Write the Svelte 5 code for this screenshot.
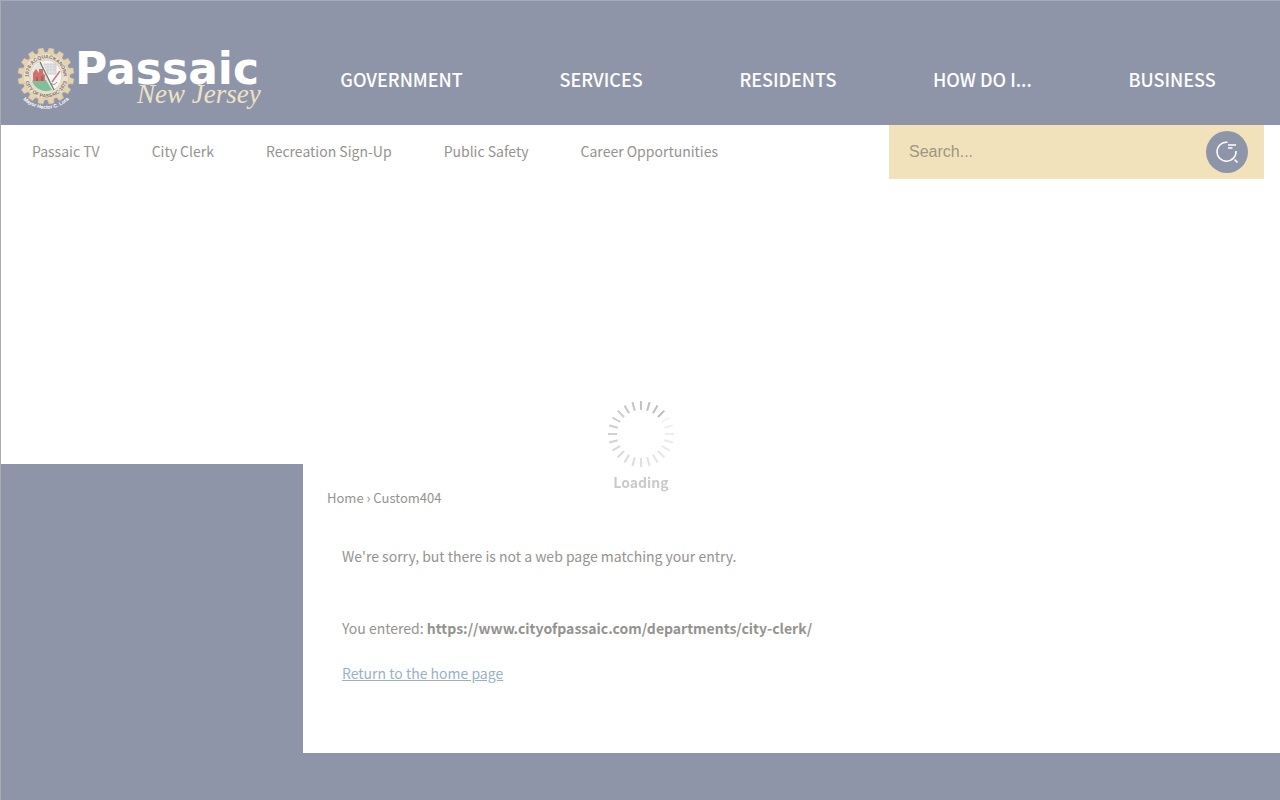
<script>
  const sections = ['GOVERNMENT', 'SERVICES', 'RESIDENTS', 'HOW DO I...', 'BUSINESS'];
  const quickLinks = ['Passaic TV', 'City Clerk', 'Recreation Sign-Up', 'Public Safety', 'Career Opportunities'];
  const teeth = Array.from({ length: 16 }, (_, i) => i * 22.5 + 11.25);
  // Spokes run clockwise from the faintest to the darkest, which sits at 45 degrees.
  const spokes = Array.from({ length: 24 }, (_, i) => ({ angle: 60 + i * 15, opacity: 0.2 + (i / 23) * 0.8 }));
  let query = $state('');
</script>

<div class="page">
  <header>
    <a class="logo" href="#home" aria-label="Passaic, New Jersey">
      <svg width="248" height="68" viewBox="0 0 248 68">
        <g transform="translate(31 31)">
          {#each teeth as angle}
            <path d="M-3.500 -22L-2.500 -28H2.500L3.500 -22Z" fill="#e6d3ac" stroke="#cdbca6" stroke-width=".5" transform="rotate({angle})" />
          {/each}
          <circle r="24" fill="#e4d3b0" />
          <circle r="22.500" fill="#ebe0cb" stroke="#d5c6ab" stroke-width=".5" />
          <circle r="16" fill="#f8f6f3" stroke="#cfc5b5" stroke-width=".7" />
          <path d="M-15 0A15 15 0 0 1 -5 -14L7 14A15 15 0 0 1 -15 0Z" fill="#e3e7da" />
          <path d="M-14 5Q-7 1 0 4L6 14A15 15 0 0 1 -14 5Z" fill="#7fc09a" />
          <path d="M-13 5V-3L-10 -7L-7 -3V-7H-3V-3L-1 -1V5Z" fill="#d3706f" />
          <path d="M-10 5V1H-8V5M-5 5V0H-3V5" fill="#a9605d" />
          <path d="M-6 -14L8 14" stroke="#68786f" stroke-width="1.200" />
          <path d="M-2 -12H10V-2H2Z" fill="#e7e7e9" stroke="#babbc0" stroke-width=".6" />
          <path d="M2 -12V-3M5 -12V-2M8 -12V-2M0 -9H10M1 -6H10" stroke="#bfc1c6" stroke-width=".5" />
          <path d="M14 -5L6 6" stroke="#cf7678" stroke-width="1.500" />
          <path d="M4 6Q8 11 11 6" fill="none" stroke="#94949c" />
          <path id="sealTop" d="M-16 7A17.5 17.5 0 1 1 16 7" fill="none" />
          <path id="sealBottom" d="M-21.500 0A21.500 21.500 0 0 0 21.500 0" fill="none" />
          <path id="mayor" d="M-29 15A32.500 32.500 0 0 0 29 15" fill="none" />
          <g font-family="Liberation Sans, Arial, sans-serif" font-weight="bold" text-anchor="middle">
            <text font-size="5" fill="#7f756b"><textPath href="#sealTop" startOffset="50%">1678·ACQUACKANONK</textPath></text>
            <text font-size="5" fill="#7f756b"><textPath href="#sealBottom" startOffset="50%">CITY OF PASSAIC·1873</textPath></text>
            <text font-size="5" fill="#fff"><textPath href="#mayor" startOffset="50%">Mayor Hector C. Lora</textPath></text>
          </g>
        </g>
        <text x="60" y="39" font-family="DejaVu Sans, sans-serif" font-weight="bold" font-size="44" fill="#fff">Passaic</text>
        <text x="122" y="58" font-family="Liberation Serif, serif" font-style="italic" font-size="27" fill="#eee2c6">New Jersey</text>
      </svg>
    </a>
    <nav class="main-nav" aria-label="Main">
      {#each sections as item}<a href="#section">{item}</a>{/each}
    </nav>
  </header>

  <div class="subheader">
    <nav class="quick" aria-label="Quick links">
      {#each quickLinks as item}<a href="#link">{item}</a>{/each}
    </nav>
    <form class="search" role="search" onsubmit={(e) => e.preventDefault()}>
      <input type="search" placeholder="Search..." aria-label="Search" bind:value={query} />
      <button type="submit" aria-label="Search">
        <svg width="42" height="42" viewBox="0 0 42 42" fill="none" stroke="#fff">
          <path d="M21.500 11.200A9.500 9.500 0 1 0 30 20" stroke-width="1.500" />
          <path d="M22 14H30M22 17H26.500" stroke-width="1.500" />
          <path d="M28.500 28.500L31.500 31.500" stroke-width="1.700" />
        </svg>
      </button>
    </form>
  </div>

  <div class="banner"></div>

  <div class="body">
    <aside></aside>
    <main>
      <div class="crumbs"><a href="#home">Home</a> › Custom404</div>
      <div class="message">
        <p class="sorry">We're sorry, but there is not a web page matching your entry.</p>
        <p>You entered: <strong>https://www.cityofpassaic.com/departments/city-clerk/</strong></p>
        <p><a class="return" href="#home">Return to the home page</a></p>
      </div>
    </main>
  </div>
  <footer></footer>
</div>

<div class="loading" role="status">
  <svg width="70" height="70" viewBox="-35 -35 70 70">
    {#each spokes as spoke}
      <path d="M0 -24V-33" stroke="#bcbcbc" stroke-width="2" opacity={spoke.opacity} transform="rotate({spoke.angle})" />
    {/each}
  </svg>
  <span>Loading</span>
</div>

<style>
  :global(body) { background: #fff; }
  .page {
    box-sizing: border-box;
    min-height: 100vh;
    display: flex;
    flex-direction: column;
    border-top: 1px solid #a5abb2;
    border-left: 1px solid #a9abad;
    font-family: "Noto Sans CJK SC", "Noto Sans", sans-serif;
    font-size: 14px;
    line-height: 24px;
    color: #959390;
  }
  a { color: inherit; text-decoration: none; }
  header {
    display: flex;
    align-items: flex-end;
    background: #8f95a8;
    padding: 44px 16px 12px 14px;
  }
  .logo { flex: none; display: block; }
  .logo svg { display: block; overflow: visible; }
  .main-nav {
    flex: 1;
    display: flex;
    align-self: center;
    margin-left: 29px;
    color: #fff;
    font-size: 18px;
    font-weight: 500;
  }
  .main-nav a { flex: 1 1 auto; text-align: center; white-space: nowrap; }
  .subheader {
    display: flex;
    align-items: center;
    justify-content: space-between;
    padding: 0 16px 0 31px;
  }
  .quick { display: flex; gap: 52px; padding-bottom: 2px; white-space: nowrap; }
  .search {
    box-sizing: border-box;
    width: 375px;
    display: flex;
    align-items: center;
    padding: 6px 16px 6px 20px;
    background: #f1e2bb;
  }
  .search input {
    flex: 1;
    min-width: 0;
    padding: 0;
    border: 0;
    background: none;
    outline: 0;
    font: 16px "Liberation Sans", Arial, sans-serif;
    color: #8f8e8c;
  }
  .search input::placeholder { color: #9c9785; }
  .search button {
    width: 42px;
    height: 42px;
    padding: 0;
    border: 0;
    border-radius: 50%;
    background: #8f95a8;
  }
  .search svg { display: block; }
  .banner { height: 285px; }
  .body { display: flex; }
  aside { width: 302px; flex: none; background: #8f95a8; }
  main { flex: 1; padding: 22px 24px 68px; }
  .crumbs { font-size: 13px; }
  .message { padding: 34px 15px 0; }
  p { margin: 0 0 21px; }
  p:last-child { margin: 0; }
  .sorry { margin-bottom: 48px; }
  .return { color: #9ab0c9; text-decoration: underline; }
  footer { flex: 1; min-height: 47px; background: #8f95a8; }
  .loading {
    position: fixed;
    top: 50%;
    left: 50%;
    width: 70px;
    margin: -1px 0 0 -34px;
    display: flex;
    flex-direction: column;
    align-items: center;
    gap: 1px;
    font: bold 14px/24px "Noto Sans CJK SC", "Noto Sans", sans-serif;
    color: #cacaca;
  }
</style>
